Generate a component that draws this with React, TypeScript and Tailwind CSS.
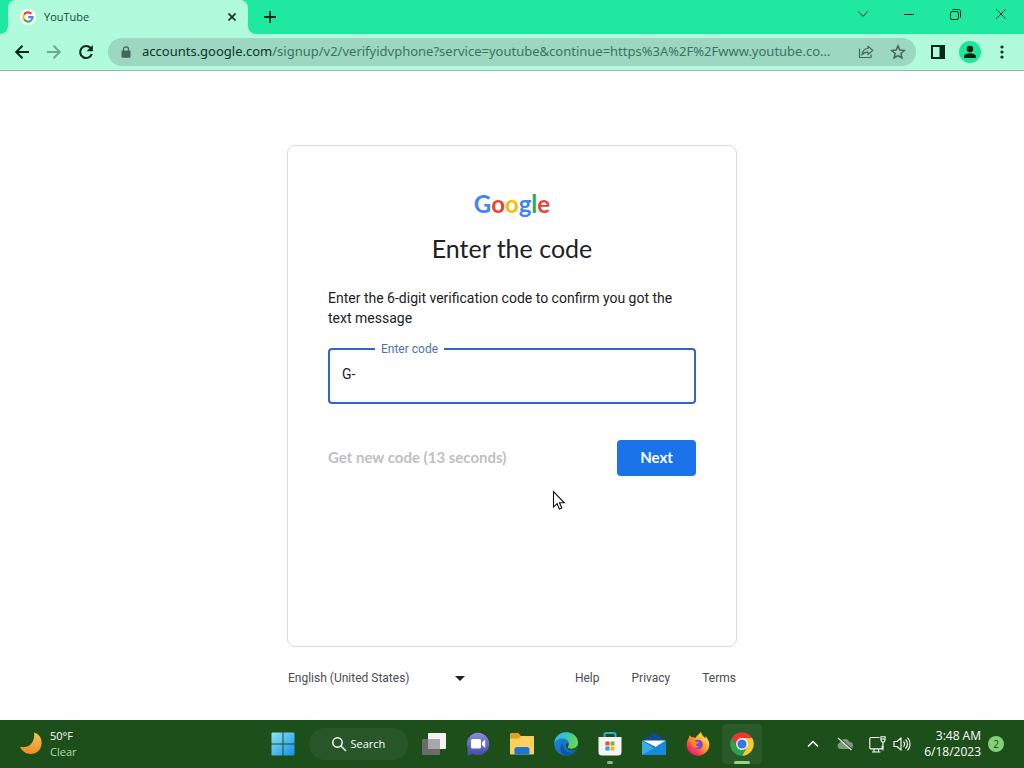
import { useState } from "react";
import type { ReactNode } from "react";

function GoogleG() {
  return (
    <svg width="16" height="16" viewBox="0 0 16 16" aria-hidden="true">
      <circle cx="8" cy="8" r="8" fill="#fff" />
      <g fill="none" strokeWidth="2.1">
        <path d="M4 5.7A4.6 4.6 0 0 1 11.4 4.9" stroke="#ea4335" />
        <path d="M4 10.3A4.7 4.7 0 0 1 4 5.7" stroke="#fbbc05" />
        <path d="M11 11.5A4.6 4.6 0 0 1 4 10.3" stroke="#34a853" />
        <path d="M8.2 8.1h4.4A4.6 4.6 0 0 1 11 11.5" stroke="#4285f4" />
      </g>
    </svg>
  );
}

function BackIcon() {
  return (
    <svg width="16" height="16" viewBox="0 0 16 16" fill="none" stroke="currentColor" strokeWidth="2" aria-hidden="true">
      <path d="M15 8H2.5M8.5 1.7 2.2 8l6.3 6.3" />
    </svg>
  );
}

function ForwardIcon() {
  return (
    <svg width="16" height="16" viewBox="0 0 16 16" fill="none" stroke="currentColor" strokeWidth="2" aria-hidden="true">
      <path d="M1 8h12.5M7.5 1.7 13.8 8l-6.3 6.3" />
    </svg>
  );
}

function ReloadIcon() {
  return (
    <svg width="16" height="16" viewBox="0 0 16 16" fill="none" aria-hidden="true">
      <path d="M13.8 10A6 6 0 1 1 12.6 4" stroke="currentColor" strokeWidth="2.1" />
      <path d="M14.8 1v6.2H8.6z" fill="currentColor" />
    </svg>
  );
}

function LockIcon() {
  return (
    <svg width="10" height="12" viewBox="0 0 10 12" aria-hidden="true">
      <rect x="0.5" y="4.5" width="9" height="7.3" rx="1" fill="currentColor" />
      <path d="M2.5 5V3.3a2.5 2.5 0 0 1 5 0V5" fill="none" stroke="currentColor" strokeWidth="1.3" />
    </svg>
  );
}

function ShareIcon() {
  return (
    <svg width="16" height="16" viewBox="0 0 16 16" fill="none" stroke="currentColor" strokeWidth="1.2" aria-hidden="true">
      <path d="M1.5 4.5v9h11.5v-3" />
      <path d="M10 2.2 14.8 6.4 10 10.5V8.2C7 8.1 5.2 9 3.9 11c.3-3.5 2.3-6.2 6.1-6.5z" strokeLinejoin="round" />
    </svg>
  );
}

function StarIcon() {
  return (
    <svg width="16" height="16" viewBox="0 0 16 16" fill="none" stroke="currentColor" strokeWidth="1.5" aria-hidden="true">
      <path d="m8 1.9 1.8 4.2 4.6.4-3.5 3 1 4.5L8 11.6 4.1 14l1-4.5-3.5-3 4.6-.4z" />
    </svg>
  );
}

function PersonIcon() {
  return (
    <svg width="22" height="22" viewBox="0 0 22 22" aria-hidden="true">
      <circle cx="11" cy="11" r="11" fill="#1de59b" />
      <circle cx="11" cy="8" r="3.2" fill="#071d14" />
      <path d="M5 17v-1.500C5 13.3 9 12.2 11 12.2s6 1.1 6 3.3V17z" fill="#071d14" />
    </svg>
  );
}

function MoonIcon() {
  return (
    <svg width="24" height="24" viewBox="0 0 24 24" aria-hidden="true">
      <defs>
        <linearGradient id="moon" x1="0" y1="0" x2="0" y2="1">
          <stop offset="0" stopColor="#f9c45a" />
          <stop offset="1" stopColor="#f08a24" />
        </linearGradient>
      </defs>
      <path d="M15 .5C20 2 23 6 22.6 11.5 22.2 18 17.5 22 12 22 7 22 3 19.5 1 14.8c3 1 8 .5 11-2.8C15 8.800 15.8 4 15 .5z" fill="url(#moon)" />
    </svg>
  );
}

function WindowsIcon() {
  return (
    <svg width="24" height="24" viewBox="0 0 24 24" aria-hidden="true">
      <defs>
        <linearGradient id="win" x1="0" y1="0" x2="1" y2="1">
          <stop offset="0" stopColor="#8be4fb" />
          <stop offset="1" stopColor="#1490e6" />
        </linearGradient>
      </defs>
      <path d="M1.5.5h10v11h-11v-10a1 1 0 0 1 1-1zM12.5.5h10a1 1 0 0 1 1 1v10h-11zM.5 12.5h11v11h-10a1 1 0 0 1-1-1zM12.5 12.5h11v10a1 1 0 0 1-1 1h-10z" fill="url(#win)" />
    </svg>
  );
}

function TaskViewIcon() {
  return (
    <svg width="24" height="24" viewBox="0 0 24 24" aria-hidden="true">
      <rect x="6" y="1" width="18" height="16" rx="1" fill="#f3f2f3" />
      <rect x="0" y="7" width="18" height="16" rx="1" fill="#6c6a6c" />
      <path d="M6 7h12v10H6z" fill="#a9a7a9" />
    </svg>
  );
}

function ChatIcon() {
  return (
    <svg width="24" height="24" viewBox="0 0 24 24" aria-hidden="true">
      <defs>
        <linearGradient id="chat" x1="0" y1="0" x2="0" y2="1">
          <stop offset="0" stopColor="#8a8ddb" />
          <stop offset="1" stopColor="#4549a8" />
        </linearGradient>
      </defs>
      <path d="M12 .8A11.2 11.2 0 1 1 7 22L1.5 23.5l.3-7A11.2 11.2 0 0 1 12 .8z" fill="url(#chat)" />
      <rect x="5" y="7" width="10" height="9.500" rx="1.5" fill="#fff" />
      <path d="m16 10.6 3.2-3v8.300l-3.2-3z" fill="#fff" />
    </svg>
  );
}

function FolderIcon() {
  return (
    <svg width="24" height="24" viewBox="0 0 24 24" aria-hidden="true">
      <path d="M1 1h7.500l2.500 3H23a1 1 0 0 1 1 1v7H0V2a1 1 0 0 1 1-1z" fill="#e0a11f" />
      <path d="M0 6.500h8.500L11 4h12a1 1 0 0 1 1 1v16.500a1 1 0 0 1-1 1H1a1 1 0 0 1-1-1z" fill="#fbd05c" />
      <path d="M4.500 22.5V17.500a2.500 2.500 0 0 1 2.500-2.500h10a2.500 2.500 0 0 1 2.500 2.500v5z" fill="#1b77cf" />
    </svg>
  );
}

function EdgeIcon() {
  return (
    <svg width="24" height="24" viewBox="0 0 24 24" aria-hidden="true">
      <defs>
        <linearGradient id="edgeTop" x1="0" y1="0" x2="1" y2="0.3">
          <stop offset="0" stopColor="#2fb6e6" />
          <stop offset="0.5" stopColor="#35c2c4" />
          <stop offset="1" stopColor="#66d74f" />
        </linearGradient>
        <linearGradient id="edgeLow" x1="0" y1="0" x2="1" y2="1">
          <stop offset="0" stopColor="#1c8ade" />
          <stop offset="1" stopColor="#1160ae" />
        </linearGradient>
      </defs>
      <circle cx="12" cy="12" r="11.8" fill="url(#edgeLow)" />
      <path d="M.3 11C1 4.5 6 .2 12.2.2 19 .2 24 5 24 10.5c0 4-3 6.400-6.3 6.400-2.700 0-4.200-1.100-4.200-2.100 0-.8 1.300-1.300 1.300-3.200 0-2.700-2.700-5-6.300-5C4.700 6.600 1.700 8.500.3 11z" fill="url(#edgeTop)" />
      <path d="M9.200 10.800c-1.200 5.400 2.500 9.500 7 9.800 2.300.1 4.200-.7 5.600-1.700-2.200 3.400-5.600 4.900-9.300 4.900C8 22.500 6.400 19.500 6.500 16.500c0-2.500 1-4.600 2.700-5.700z" fill="#0d57a8" />
      <path d="M13.600 14.700c0 1.100 1.500 2.200 4.100 2.200 2.200 0 4.200-1 5.400-2.800-.1 1.500-.5 2.500-1.200 3.500-4 2-8.700.5-9.700-2.500-.7-1.900-.3-3.600 1.200-4.200 1.300.2 1.600 1.200 1.200 2-.4.800-1 1.200-1 1.800z" fill="#1d4f1a" />
    </svg>
  );
}

function StoreIcon() {
  return (
    <svg width="24" height="24" viewBox="0 0 24 24" aria-hidden="true">
      <path d="M6.5 6V2.500A1.500 1.500 0 0 1 8 1h8a1.500 1.500 0 0 1 1.500 1.500V6" fill="none" stroke="#35a9cf" strokeWidth="2" />
      <path d="M.5 5h23v15a3.500 3.500 0 0 1-3.500 3.500H4A3.500 3.500 0 0 1 .5 20z" fill="#f6f5f6" />
      <path d="M7.500 9.500h4v4h-4z" fill="#e8502a" />
      <path d="M12.500 9.500h4v4h-4z" fill="#7cb82f" />
      <path d="M7.500 14.500h4v4h-4z" fill="#2c9fe0" />
      <path d="M12.500 14.500h4v4h-4z" fill="#f5b51e" />
    </svg>
  );
}

function MailIcon() {
  return (
    <svg width="24" height="24" viewBox="0 0 24 24" aria-hidden="true">
      <path d="M0 8.500 10.500 1.500a3 3 0 0 1 3 0L24 8.500l-12 8z" fill="#104a91" />
      <path d="M0 8.500 13 16l11-7.500V22a1 1 0 0 1-1 1H1a1 1 0 0 1-1-1z" fill="#38acec" />
      <path d="M0 23 24 8.500V22a1 1 0 0 1-1 1z" fill="#168bdd" />
      <path d="M1 8.500h22.500L13.500 15z" fill="#fff" />
    </svg>
  );
}

function FirefoxIcon() {
  return (
    <svg width="24" height="24" viewBox="0 0 24 24" aria-hidden="true">
      <defs>
        <linearGradient id="fox" x1="0.85" y1="0.1" x2="0.15" y2="0.9">
          <stop offset="0" stopColor="#ffe84a" />
          <stop offset="0.45" stopColor="#ff9a2a" />
          <stop offset="0.8" stopColor="#fb3b4e" />
          <stop offset="1" stopColor="#e31587" />
        </linearGradient>
      </defs>
      <path d="M15 0c.3 2.800 2.700 4.500 4.200 6.200l.2-2C22 6.700 23.500 9.800 23.300 13c-.3 6-5.200 10.700-11.300 10.700S.7 19 .7 12.800c0-3.500 1.200-5.700 2-6.800l.7-2.800 2.800 2.300c1.500-.3 2.500-.1 3.600.4C10.500 3.500 13 2.300 15 0z" fill="url(#fox)" />
      <circle cx="12" cy="12.500" r="4.800" fill="#8145d8" />
      <path d="M2.500 8c2.500-1.500 5.500-.5 7 1.500 1.500.2 2.500.3 3.300.8-.2 1.200-1.500 1.500-2.700 1.800-.5 1.500 1 2.600 2.900 2.500-2 1.900-5.500 1.400-6.700-1.100C5.500 11.500 4.500 9.500 2.500 8z" fill="#ff8a2d" />
    </svg>
  );
}

function ChromeIcon() {
  return (
    <svg width="24" height="24" viewBox="0 0 24 24" aria-hidden="true">
      <path d="M12 12 1.800 6.100A11.800 11.800 0 0 1 22.200 6.100z" fill="#e53a2e" />
      <path d="M12 6.100h10.200A11.800 11.800 0 0 1 12 23.800l5.100-8.900z" fill="#fcc934" />
      <path d="M1.800 6.100 6.900 14.900 12 12V6.100z" fill="#e53a2e" />
      <path d="M1.800 6.100 6.900 14.900l5.100 3 5.100-3L12 23.800A11.800 11.800 0 0 1 1.800 6.100z" fill="#2da24c" />
      <circle cx="12" cy="12" r="5.900" fill="#fff" />
      <circle cx="12" cy="12" r="4.600" fill="#3577e3" />
    </svg>
  );
}

interface TaskApp {
  label: string;
  icon: ReactNode;
  state?: "open" | "active";
}

const APPS: TaskApp[] = [
  { label: "Task View", icon: <TaskViewIcon /> },
  { label: "Chat", icon: <ChatIcon /> },
  { label: "File Explorer", icon: <FolderIcon /> },
  { label: "Microsoft Edge", icon: <EdgeIcon /> },
  { label: "Microsoft Store", icon: <StoreIcon />, state: "open" },
  { label: "Mail", icon: <MailIcon /> },
  { label: "Firefox", icon: <FirefoxIcon /> },
  { label: "Google Chrome", icon: <ChromeIcon />, state: "active" },
];

function TabStrip() {
  return (
    <header className="flex h-[34px] items-stretch bg-[#1fe9a1] pl-2 text-[#062d1f]">
      <div className="relative flex w-60 items-center rounded-t-lg bg-[#b0fbdc] px-3">
        <svg className="absolute bottom-0 -left-2" width="8" height="8" viewBox="0 0 8 8" aria-hidden="true">
          <path d="M8 0v8H0a8 8 0 0 0 8-8z" fill="#b0fbdc" />
        </svg>
        <svg className="absolute -right-2 bottom-0" width="8" height="8" viewBox="0 0 8 8" aria-hidden="true">
          <path d="M0 0v8h8a8 8 0 0 1-8-8z" fill="#b0fbdc" />
        </svg>
        <GoogleG />
        <span className="ml-2 flex-1 text-[11px] text-[#17443a]">YouTube</span>
        <button type="button" aria-label="Close tab">
          <svg width="8" height="8" viewBox="0 0 8 8" stroke="currentColor" strokeWidth="1.6" aria-hidden="true">
            <path d="m.5.5 7 7m0-7-7 7" />
          </svg>
        </button>
      </div>
      <button type="button" aria-label="New tab" className="ml-4 flex items-center">
        <svg width="12" height="12" viewBox="0 0 12 12" stroke="currentColor" strokeWidth="1.8" aria-hidden="true">
          <path d="M6 0v12M0 6h12" />
        </svg>
      </button>
      <div className="ml-auto flex h-7 items-center">
        <button type="button" aria-label="Search tabs" className="flex w-[46px] justify-center">
          <svg width="12" height="8" viewBox="0 0 12 8" fill="none" stroke="currentColor" aria-hidden="true">
            <path d="m1 1 5 5.500L11 1" />
          </svg>
        </button>
        <button type="button" aria-label="Minimize" className="flex w-[46px] justify-center">
          <svg width="10" height="10" viewBox="0 0 10 10" stroke="currentColor" aria-hidden="true">
            <path d="M0 5.500h10" />
          </svg>
        </button>
        <button type="button" aria-label="Restore" className="flex w-[46px] justify-center">
          <svg width="11" height="11" viewBox="0 0 11 11" fill="none" stroke="currentColor" aria-hidden="true">
            <rect x="0.5" y="2.5" width="8" height="8" rx="1.5" />
            <path d="M2.500.5H8.500a2 2 0 0 1 2 2v6" />
          </svg>
        </button>
        <button type="button" aria-label="Close" className="flex w-[46px] justify-center">
          <svg width="10" height="10" viewBox="0 0 10 10" stroke="currentColor" aria-hidden="true">
            <path d="m0 0 10 10M10 0 0 10" />
          </svg>
        </button>
      </div>
    </header>
  );
}

function Toolbar() {
  return (
    <div className="flex h-[37px] items-center border-b border-[#93bcae] bg-[#b0fbdc] px-[14px] text-[#06271b]">
      <div className="flex gap-4">
        <button type="button" aria-label="Back"><BackIcon /></button>
        <button type="button" aria-label="Forward" className="text-[#6da892]"><ForwardIcon /></button>
        <button type="button" aria-label="Reload"><ReloadIcon /></button>
      </div>
      <div className="ml-[14px] flex h-7 min-w-0 flex-1 items-center rounded-full bg-[#9bd7c1] pr-[10px] pl-[13px] text-[#44665b]">
        <LockIcon />
        <p className="ml-[11px] min-w-0 flex-1 truncate font-[Noto_Sans,sans-serif] text-[13px] text-[#3f7162]">
          <span className="text-[#0c3428]">accounts.google.com</span>
          /signup/v2/verifyidvphone?service=youtube&amp;continue=https%3A%2F%2Fwww.youtube.co...
        </p>
        <button type="button" aria-label="Share this page" className="ml-3"><ShareIcon /></button>
        <button type="button" aria-label="Bookmark this tab" className="ml-4"><StarIcon /></button>
      </div>
      <button type="button" aria-label="Side panel" className="ml-[14px]">
        <svg width="16" height="16" viewBox="0 0 16 16" aria-hidden="true">
          <path d="M1 1h14v14H1zM3 3v10h6.500V3z" fillRule="evenodd" fill="currentColor" />
        </svg>
      </button>
      <button type="button" aria-label="Profile" className="ml-[13px]"><PersonIcon /></button>
      <button type="button" aria-label="Menu" className="ml-[13px]">
        <svg width="16" height="16" viewBox="0 0 16 16" fill="currentColor" aria-hidden="true">
          <circle cx="8" cy="3" r="1.6" />
          <circle cx="8" cy="8" r="1.6" />
          <circle cx="8" cy="13" r="1.6" />
        </svg>
      </button>
    </div>
  );
}

function GoogleWordmark() {
  return (
    <div className="text-center font-[Lato,sans-serif] text-2xl leading-7 font-bold">
      <span className="text-[#4285f4]">G</span>
      <span className="text-[#ea4335]">o</span>
      <span className="text-[#fbbc05]">o</span>
      <span className="text-[#4285f4]">g</span>
      <span className="text-[#34a853]">l</span>
      <span className="text-[#ea4335]">e</span>
    </div>
  );
}

function CodeForm() {
  const [code, setCode] = useState("G-");

  return (
    <form
      className="min-h-[502px] w-full rounded-lg border border-[#dadce0] px-10 pt-11 text-sm text-[#202124]"
      onSubmit={(e) => e.preventDefault()}
    >
      <GoogleWordmark />
      <h1 className="mt-[14px] text-center font-[Lato,sans-serif] text-[25px] leading-8">Enter the code</h1>
      <p className="mt-6 leading-5">Enter the 6-digit verification code to confirm you got the text message</p>
      <div className="relative mt-5">
        <input
          id="code"
          type="text"
          value={code}
          onChange={(e) => setCode(e.target.value)}
          className="block h-14 w-full rounded border-2 border-[#2f68c0] bg-white px-3 pb-1 text-sm outline-none"
        />
        <label htmlFor="code" className="absolute -top-[7px] left-[47px] bg-white px-[6px] text-xs text-[#4a6fc0]">
          Enter code
        </label>
      </div>
      <div className="mt-9 flex items-center justify-between font-[Lato,sans-serif] text-[15px] font-bold">
        <button type="button" disabled className="text-[#bfc0c2]">
          Get new code (13 seconds)
        </button>
        <button type="submit" className="h-9 w-[79px] rounded bg-[#1a73e8] text-white">
          Next
        </button>
      </div>
    </form>
  );
}

function PageFooter() {
  return (
    <footer className="mt-[23px] flex items-center justify-between px-px text-xs text-[#4a4c50]">
      <div className="relative flex items-center">
        <select aria-label="Language" className="w-[184px] appearance-none bg-transparent outline-none">
          <option>English (United States)</option>
        </select>
        <svg className="pointer-events-none absolute right-[7px]" width="10" height="5" viewBox="0 0 10 5" aria-hidden="true">
          <path d="M0 0h10L5 5z" fill="#202124" />
        </svg>
      </div>
      <nav className="flex gap-8">
        <a href="#help">Help</a>
        <a href="#privacy">Privacy</a>
        <a href="#terms">Terms</a>
      </nav>
    </footer>
  );
}

function Taskbar() {
  return (
    <footer className="grid h-12 grid-cols-[1fr_auto_1fr] items-center bg-[#1d4f1a] text-[11px] text-white">
      <button type="button" className="flex items-center gap-[7px] justify-self-start pl-[19px] text-left leading-4">
        <MoonIcon />
        <span>
          <span className="block">50°F</span>
          <span className="block text-[#b5d9ae]">Clear</span>
        </span>
      </button>

      <div className="flex items-center gap-1">
        <button type="button" aria-label="Start" className="flex size-10 items-center justify-center">
          <WindowsIcon />
        </button>
        <button type="button" className="mx-0.5 flex h-8 w-[99px] items-center gap-1 rounded-full bg-[#275629] pl-[22px]">
          <svg width="16" height="16" viewBox="0 0 16 16" fill="none" stroke="currentColor" strokeWidth="1.5" aria-hidden="true">
            <circle cx="6.5" cy="6.5" r="4.7" />
            <path d="m10 10 4.500 4.500" strokeLinecap="round" />
          </svg>
          Search
        </button>
        {APPS.map((app) => (
          <button
            key={app.label}
            type="button"
            aria-label={app.label}
            className={
              app.state === "active"
                ? "relative flex size-10 items-center justify-center rounded bg-[#2a5a29]"
                : "relative flex size-10 items-center justify-center"
            }
          >
            {app.icon}
            {app.state === "active" && <span className="absolute bottom-0 h-[3px] w-4 rounded-full bg-[#92d488]" />}
            {app.state === "open" && <span className="absolute bottom-0 h-[3px] w-[6px] rounded-full bg-[#8fb58b]" />}
          </button>
        ))}
      </div>

      <div className="flex items-center justify-self-end pr-5">
        <button type="button" aria-label="Show hidden icons">
          <svg width="12" height="8" viewBox="0 0 12 8" fill="none" stroke="currentColor" strokeWidth="1.5" aria-hidden="true">
            <path d="m1 6.500 5-5 5 5" />
          </svg>
        </button>
        <svg className="ml-[18px]" width="16" height="14" viewBox="0 0 16 14" aria-hidden="true">
          <path d="M3.500 12a3.300 3.300 0 0 1-.3-6.500A5 5 0 0 1 12.500 5 3.500 3.500 0 0 1 12.500 12z" fill="#82977f" />
          <path d="m2 .8 13 11.500" stroke="#1d4f1a" strokeWidth="1.2" />
          <path d="m1 1 13.500 12" stroke="#e6efe4" strokeWidth="1.100" />
        </svg>
        <svg className="ml-4" width="17" height="17" viewBox="0 0 17 17" fill="none" stroke="currentColor" strokeWidth="1.1" aria-hidden="true">
          <path d="M10.500 1.500H2A1.200 1.200 0 0 0 .8 2.700v9A1.200 1.200 0 0 0 2 12.900h10a1.200 1.200 0 0 0 1.200-1.200V9.500M5 13v3m4.500-3v3M3 16h8.500M14 6v8.500" />
          <path d="M12 .8h4v3.500l-1 1.700h-2l-1-1.700zM12 3h4" />
        </svg>
        <svg className="ml-[7px]" width="18" height="16" viewBox="0 0 18 16" fill="none" stroke="currentColor" strokeWidth="1.1" aria-hidden="true">
          <path d="M1 5.500h3l4-3.700v12.400l-4-3.700H1z" strokeLinejoin="round" />
          <path d="M10.500 5.500a3.500 3.500 0 0 1 0 5M12.500 3.500a6.300 6.300 0 0 1 0 9M14.500 1.700a9 9 0 0 1 0 12.600" />
        </svg>
        <div className="ml-[13px] text-right text-xs leading-4">
          <div>3:48 AM</div>
          <div>6/18/2023</div>
        </div>
        <span className="ml-[7px] flex size-4 items-center justify-center rounded-full bg-[#85ce7c] text-[10px] text-[#1d4f1a]">2</span>
      </div>
    </footer>
  );
}

export default function App() {
  return (
    <div className="relative flex min-h-screen flex-col bg-white font-[Open_Sans,Noto_Sans,sans-serif]">
      <TabStrip />
      <Toolbar />
      <main className="flex-1 px-4 pt-[74px] font-[Roboto,sans-serif]">
        <div className="mx-auto max-w-[450px]">
          <CodeForm />
          <PageFooter />
        </div>
      </main>
      <Taskbar />

      {/* Mouse pointer */}
      <svg className="pointer-events-none absolute top-[490px] left-[552px]" width="14" height="21" viewBox="0 0 14 21" aria-hidden="true">
        <path d="M1.500 1.500v15.500l3.600-3.300 2.300 5.300 2.400-1-2.300-5.200h4.800z" fill="#fff" stroke="#111" strokeWidth="1.1" />
      </svg>
    </div>
  );
}
